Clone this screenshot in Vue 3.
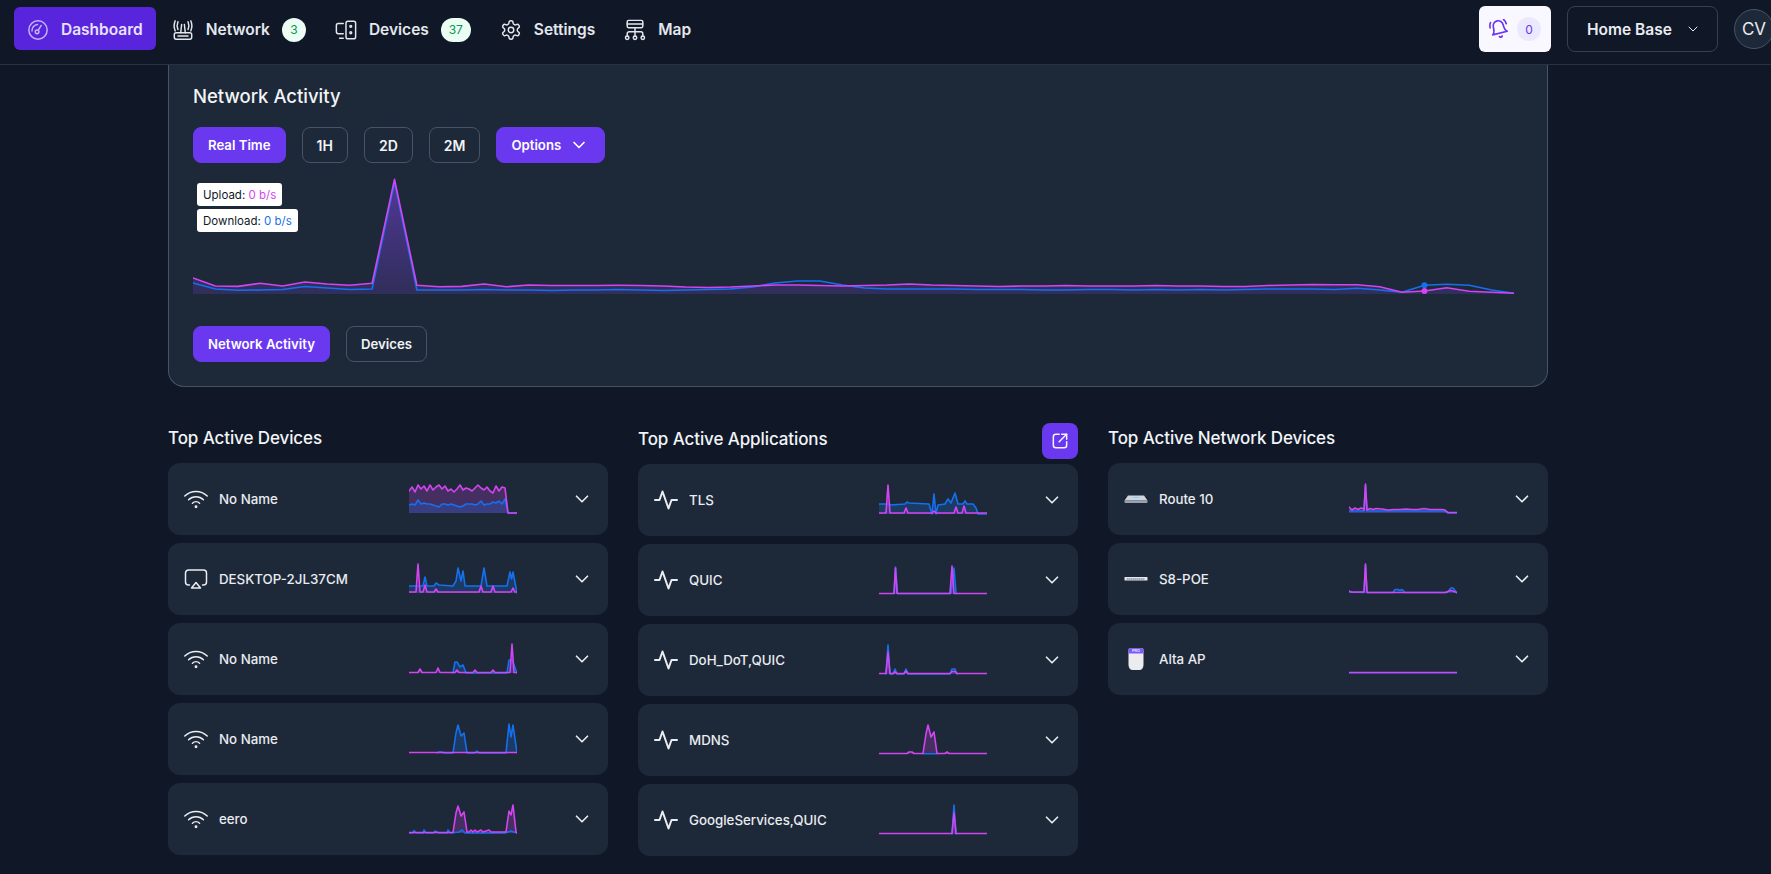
<script setup>
// chart colours
const PINK = "#d444f1";
const BLUE = "#1570ef";

const CHART_W = 1321;
const BASE = 123;

// main chart: height above the baseline, one value per 22.4px
const mainUp = [16, 8, 7.6, 10.7, 8, 12, 10, 8.7, 10.7, 114.7, 8.7, 7.3, 7.6, 10, 7.3, 9, 8.5, 8.5, 8.5, 8.7, 8.5, 8, 7, 6.5, 7, 8, 9, 9, 8.5, 8, 8.5, 9, 10, 9, 8.5, 8, 7.5, 8, 8, 8.5, 8, 8, 8, 8.5, 8, 8, 7.5, 7.5, 8.5, 9, 9.5, 9.3, 9.3, 7.3, 1.7, 3, 6.3, 2.7, 1.7, 0.7];
const mainDown = [11, 5, 3.7, 4, 4.5, 7.5, 6, 4.5, 5, 112, 4, 4, 4, 4.5, 4, 4, 3.5, 4, 4, 4.5, 4, 3.5, 4, 4.5, 5, 7, 11, 13, 13, 9, 6, 5, 5, 5, 5, 4.5, 4.5, 4.5, 4, 4, 4.5, 4.5, 4, 4.5, 4, 4.5, 4, 4.5, 5, 5, 5, 4.5, 5.7, 4, 1.7, 8.7, 9.7, 8.7, 4, 0.7];

const toPoints = (vals) => vals.map((h, i) => [(i * CHART_W) / 59, h]);

// turns [x, height] pairs into svg paths
const linePath = (pts, base) => pts.map((p, i) => `${i ? "L" : "M"}${p[0]} ${base - p[1]}`).join(" ");
const areaPath = (pts, base) => `${linePath(pts, base)} L${pts[pts.length - 1][0]} ${base} L${pts[0][0]} ${base} Z`;

const mainUpPts = toPoints(mainUp);
const mainDownPts = toPoints(mainDown);

// even steps, for the noisy series
const steps = (vals, step, tail) => [...vals.map((h, i) => [i * step, h]), ...tail];

const devices = [
  {
    id: 1,
    name: "No Name",
    icon: "wifi",
    up: steps([22, 26, 21, 28, 24, 27, 22, 28, 23, 26, 28, 24, 27, 22, 24, 21, 24, 28, 23, 25, 24, 22, 25, 28, 25, 23, 26, 22, 20, 27, 22, 26, 25], 3, [[99, 0], [108, 0]]),
    down: steps([8, 9, 8, 13, 9, 10, 9, 9, 8, 7, 6, 9, 9, 8, 9, 8, 7, 6, 7, 9, 9, 9, 8, 9, 12, 8, 9, 9, 11, 10, 12, 9, 14], 3, [[99, 0], [108, 0]]),
  },
  {
    id: 2,
    name: "DESKTOP-2JL37CM",
    icon: "airplay",
    up: [[0, 1], [7, 1], [9, 29], [11, 1], [14, 1], [16, 8], [18, 1], [25, 1], [27, 4], [29, 1], [70, 1], [72, 7], [74, 1], [82, 1], [84, 7], [86, 1], [102, 1], [104, 5], [106, 1], [108, 1]],
    down: [[0, 7], [14, 7], [16, 16], [18, 7], [25, 7], [27, 10], [30, 8], [44, 7], [47, 12], [49, 25], [52, 12], [54, 22], [56, 7], [72, 7], [75, 25], [78, 7], [98, 7], [101, 21], [102.5, 14], [104, 21], [108, 0]],
  },
  {
    id: 3,
    name: "No Name",
    icon: "wifi",
    up: [[0, 0.5], [9, 0.5], [11, 4], [13, 0.5], [27, 0.5], [29, 5], [31, 0.5], [46, 0.5], [48, 3], [50, 0.5], [64, 0.5], [66, 3], [68, 0.5], [82, 0.5], [84, 3], [86, 0.5], [101, 0.5], [103, 29], [105, 0.5], [108, 0.5]],
    down: [[44, 0], [46, 11], [48, 11], [51, 6], [54, 8], [57, 0], [98, 0], [100, 13], [103, 13], [105, 8], [108, 0]],
  },
  {
    id: 4,
    name: "No Name",
    icon: "wifi",
    up: [[0, 0.5], [108, 0.5]],
    down: [[28, 0], [30, 1], [33, 1], [35, 0], [44, 0], [47, 20], [49, 28], [52, 17], [55, 20], [58, 0], [66, 0], [68, 2], [70, 0], [97, 0], [100, 29], [102, 16], [104, 28], [108, 0]],
  },
  {
    id: 5,
    name: "eero",
    icon: "wifi",
    up: [[0, 0.5], [44, 0.5], [47, 20], [49, 27], [52, 17], [55, 21], [58, 1], [60, 1], [62, 3], [64, 1], [66, 3], [68, 1], [72, 3], [74, 1], [80, 3], [82, 1], [97, 1], [100, 22], [102, 18], [104, 28], [107, 1], [108, 0]],
    down: [[0, 0], [4, 0], [5, 2.5], [7, 0], [14, 0], [15, 3], [17, 0], [25, 0], [26, 2], [30, 0], [38, 0], [39, 3], [41, 0], [50, 1], [53, 3], [56, 0], [96, 0], [102, 2], [108, 0]],
  },
];

const applications = [
  {
    id: 1,
    name: "TLS",
    icon: "activity",
    up: [[0, 1], [7, 1], [9, 29], [11, 1], [25, 1], [27, 6], [29, 1], [53, 1], [55, 3], [57, 1], [75, 1], [77, 7], [79, 1], [83, 1], [85, 8], [87, 1], [108, 1]],
    down: [[0, 10], [10, 10], [12, 9], [26, 10], [28, 12], [30, 11], [50, 10], [53, 0], [55, 20], [57, 0], [59, 9], [66, 10], [69, 15], [72, 11], [76, 21], [79, 10], [84, 10], [86, 13], [88, 10], [94, 10], [97, 6], [99, 0], [108, 0]],
  },
  {
    id: 2,
    name: "QUIC",
    icon: "activity",
    up: [[0, 0.5], [15, 0.5], [16.5, 26], [18, 0.5], [71, 0.5], [73, 28], [75, 0.5], [108, 0.5]],
    down: [[15, 0.5], [16.5, 27], [18.5, 0.5], [72, 0.5], [75, 26], [77, 0.5]],
  },
  {
    id: 3,
    name: "DoH_DoT,QUIC",
    icon: "activity",
    up: [[0, 0.5], [7, 0.5], [9, 22], [11, 0.5], [14, 0.5], [16, 2], [18, 0.5], [25, 0.5], [27, 3], [29, 0.5], [71, 0.5], [73, 2.5], [76, 2.5], [78, 0.5], [108, 0.5]],
    down: [[7, 0], [9, 29], [11, 0], [14, 0], [16, 5], [18, 0], [25, 0], [27, 5], [29, 0], [71, 0], [73, 5], [76, 5], [78, 0]],
  },
  {
    id: 4,
    name: "MDNS",
    icon: "activity",
    up: [[0, 0.5], [28, 0.5], [30, 2], [33, 2], [35, 0.5], [44, 0.5], [47, 20], [49, 29], [52, 17], [55, 22], [58, 0.5], [66, 0.5], [68, 2], [70, 0.5], [108, 0.5]],
    down: [[44, 0.3], [58, 0.3]],
  },
  {
    id: 5,
    name: "GoogleServices,QUIC",
    icon: "activity",
    up: [[0, 0.5], [73, 0.5], [75, 21], [77, 0.5], [108, 0.5]],
    down: [[73, 0], [75, 29], [77, 0]],
  },
];

const networkDevices = [
  {
    id: 1,
    name: "Route 10",
    icon: "router",
    up: steps([6, 3, 5, 3.5, 5, 4], 3, [[15, 3], [16.5, 29], [18, 3], [21, 4.5], [24, 3.5], [27, 4.5], [33, 4], [39, 3], [45, 3.5], [51, 3.5], [57, 4], [63, 3.5], [69, 3.5], [75, 4.5], [81, 3.5], [87, 3.5], [93, 3.5], [96, 3], [99, 0.5], [108, 0.5]]),
    down: [[0, 2], [15, 2], [16.5, 27], [18, 2], [96, 2], [99, 0], [108, 0]],
  },
  {
    id: 2,
    name: "S8-POE",
    icon: "switch",
    up: [[0, 2], [3, 0.8], [12, 1], [15, 1], [16.5, 29], [18, 0.5], [96, 0.5], [102, 2.5], [108, 0.5]],
    down: [[0, 1], [15, 0.5], [16.5, 28], [18, 0.5], [44, 0.5], [46, 3.5], [49, 3.5], [51, 2.5], [53, 3.5], [56, 0.5], [98, 0.5], [102, 5], [104, 5], [108, 0]],
  },
  {
    id: 3,
    name: "Alta AP",
    icon: "ap",
    up: [[0, 0.5], [108, 0.5]],
    down: [[0, 0.2], [108, 0.2]],
  },
];

const columns = [
  { id: 1, title: "Top Active Devices", items: devices },
  { id: 2, title: "Top Active Applications", items: applications, link: true },
  { id: 3, title: "Top Active Network Devices", items: networkDevices },
];
</script>

<template>
  <div class="page">
    <!-- top bar -->
    <header class="topbar">
      <nav class="nav">
        <a class="nav-item active">
          <svg class="nav-icon" viewBox="0 0 24 24"><circle cx="12" cy="12" r="10" /><circle cx="11" cy="14" r="2" /><path d="M12.2 12.4 15.5 7" /><path d="M5.5 13a6.5 6.5 0 0 1 6-7" /></svg>
          Dashboard
        </a>
        <a class="nav-item">
          <svg class="nav-icon" viewBox="0 0 24 24"><rect x="2.500" y="15" width="19" height="7" rx="2" /><path d="M6.500 18.500h11" /><path d="M9.500 15 10.500 6" /><path d="M14.500 15 13.500 6" /><path d="M6.500 11.500a11 11 0 0 1 0-8.500" /><path d="M17.500 11.500a11 11 0 0 0 0-8.500" /><path d="M3.500 13a14 14 0 0 1 0-11" /><path d="M20.500 13a14 14 0 0 0 0-11" /></svg>
          Network
          <span class="count">3</span>
        </a>
        <a class="nav-item">
          <svg class="nav-icon" viewBox="0 0 24 24"><rect x="12" y="2.500" width="10.500" height="19" rx="2" /><circle cx="17.200" cy="8" r="1" /><circle cx="17.200" cy="15" r="1" /><path d="M9 5H3.500a2 2 0 0 0-2 2v7a2 2 0 0 0 2 2H9" /><path d="M5 21h4" /></svg>
          Devices
          <span class="count wide">37</span>
        </a>
        <a class="nav-item">
          <svg class="nav-icon" viewBox="0 0 24 24"><path d="M12.22 2h-.44a2 2 0 0 0-2 2v.18a2 2 0 0 1-1 1.73l-.43.25a2 2 0 0 1-2 0l-.15-.08a2 2 0 0 0-2.73.73l-.22.38a2 2 0 0 0 .73 2.73l.15.1a2 2 0 0 1 1 1.72v.51a2 2 0 0 1-1 1.74l-.15.09a2 2 0 0 0-.73 2.73l.22.38a2 2 0 0 0 2.73.73l.15-.08a2 2 0 0 1 2 0l.43.25a2 2 0 0 1 1 1.73V20a2 2 0 0 0 2 2h.44a2 2 0 0 0 2-2v-.18a2 2 0 0 1 1-1.73l.43-.25a2 2 0 0 1 2 0l.15.08a2 2 0 0 0 2.73-.73l.22-.39a2 2 0 0 0-.73-2.73l-.15-.08a2 2 0 0 1-1-1.74v-.5a2 2 0 0 1 1-1.74l.15-.09a2 2 0 0 0 .73-2.73l-.22-.38a2 2 0 0 0-2.73-.73l-.15.08a2 2 0 0 1-2 0l-.43-.25a2 2 0 0 1-1-1.73V4a2 2 0 0 0-2-2z" /><circle cx="12" cy="12" r="3" /></svg>
          Settings
        </a>
        <a class="nav-item">
          <svg class="nav-icon" viewBox="0 0 24 24"><rect x="3.500" y="1.500" width="17" height="8" rx="1.500" /><path d="M3.500 5.500h17" /><path d="M12 9.500V19" /><path d="M3.500 19v-3a2 2 0 0 1 2-2h13a2 2 0 0 1 2 2v3" /><circle cx="3.500" cy="20.500" r="1.900" /><circle cx="12" cy="20.500" r="1.900" /><circle cx="20.500" cy="20.500" r="1.900" /></svg>
          Map
        </a>
      </nav>
      <div class="top-right">
        <button class="bell-btn">
          <svg class="bell" viewBox="0 0 24 24"><g transform="rotate(-14 12 12)"><path d="M6 8a6 6 0 0 1 12 0c0 7 3 9 3 9H3s3-2 3-9" /><path d="M10.300 21a1.940 1.940 0 0 0 3.400 0" /><path d="M4 2C2.800 3.700 2 5.700 2 8" /><path d="M22 8c0-2.300-.8-4.300-2-6" /></g></svg>
          <span class="bell-count">0</span>
        </button>
        <button class="site-btn">
          Home Base
          <svg class="chev small" viewBox="0 0 24 24"><path d="M6 9l6 6 6-6" /></svg>
        </button>
        <div class="avatar">CV</div>
      </div>
    </header>

    <main class="content">
      <!-- network activity panel -->
      <section class="panel">
        <h2 class="panel-title">Network Activity</h2>
        <div class="btn-row">
          <button class="btn primary">Real Time</button>
          <button class="btn short">1H</button>
          <button class="btn short">2D</button>
          <button class="btn short">2M</button>
          <button class="btn primary options">
            Options
            <svg class="chev" viewBox="0 0 24 24"><path d="M6 9l6 6 6-6" /></svg>
          </button>
        </div>
        <div class="chart">
          <svg :width="CHART_W" height="131" :viewBox="`0 0 ${CHART_W} 131`">
            <defs>
              <linearGradient id="mainFill" x1="0" y1="0" x2="0" y2="1">
                <stop offset="0" stop-color="#5b3aa8" stop-opacity="0.85" />
                <stop offset="1" stop-color="#5b3aa8" stop-opacity="0.3" />
              </linearGradient>
            </defs>
            <path :d="areaPath(mainUpPts, BASE)" fill="url(#mainFill)" />
            <path :d="linePath(mainDownPts, BASE)" :stroke="BLUE" class="line" />
            <path :d="linePath(mainUpPts, BASE)" :stroke="PINK" class="line" />
            <circle :cx="mainDownPts[55][0]" :cy="BASE - mainDown[55]" r="3" :fill="BLUE" />
            <circle :cx="mainUpPts[55][0]" :cy="BASE - mainUp[55]" r="3" :fill="PINK" />
          </svg>
          <div class="tips">
            <div class="tip">Upload: <span class="pink">0 b/s</span></div>
            <div class="tip">Download: <span class="blue">0 b/s</span></div>
          </div>
        </div>
        <div class="btn-row">
          <button class="btn primary">Network Activity</button>
          <button class="btn">Devices</button>
        </div>
      </section>

      <!-- top lists -->
      <section class="lists">
        <div v-for="col in columns" :key="col.id" class="column">
          <div class="col-head" :class="{ linked: col.link }">
            <h3>{{ col.title }}</h3>
            <button v-if="col.link" class="link-btn">
              <svg viewBox="0 0 24 24"><path d="M11 4H7a3 3 0 0 0-3 3v10a3 3 0 0 0 3 3h10a3 3 0 0 0 3-3v-4" /><path d="M14 4h6v6" /><path d="M20 4l-9 9" /></svg>
            </button>
          </div>
          <div class="cards">
            <div v-for="item in col.items" :key="item.id" class="card">
              <div class="card-left">
                <svg v-if="item.icon === 'wifi'" class="card-icon" viewBox="0 0 24 24"><path d="M.8 9a16 16 0 0 1 22.400 0" /><path d="M4.600 12.700a10.600 10.600 0 0 1 14.800 0" /><path d="M8.400 16.200a5.200 5.200 0 0 1 7.200 0" /><circle cx="12" cy="19.800" r="0.7" /></svg>
                <svg v-else-if="item.icon === 'airplay'" class="card-icon" viewBox="0 0 24 24"><path d="M5.500 18H4.500a3 3 0 0 1-3-3V6a3 3 0 0 1 3-3h15a3 3 0 0 1 3 3v9a3 3 0 0 1-3 3h-1" /><path d="M12 15.500l4.500 5.500h-9z" /></svg>
                <svg v-else-if="item.icon === 'activity'" class="card-icon pulse" viewBox="0 0 24 24"><path d="M1 12h4.500L8.500 3.500 14.500 20.500 17.500 12H23" /></svg>
                <svg v-else-if="item.icon === 'router'" class="card-icon solid" viewBox="0 0 24 24">
                  <path d="M4 8.500h16l3.500 5h-23z" fill="#d0d5dd" />
                  <path d="M.5 13.500h23v1.500a1 1 0 0 1-1 1h-21a1 1 0 0 1-1-1z" fill="#98a2b3" />
                  <path d="M9 10.500h6" stroke="#7cd4fd" stroke-width="1" />
                </svg>
                <svg v-else-if="item.icon === 'switch'" class="card-icon solid" viewBox="0 0 24 24">
                  <rect x="0.500" y="10" width="23" height="3.500" rx="0.500" fill="#e4e7ec" />
                  <path d="M3 12h18" stroke="#667085" stroke-width="1" stroke-dasharray="1 1" />
                </svg>
                <svg v-else class="card-icon solid" viewBox="0 0 24 24">
                  <path d="M4.500 3a2 2 0 0 1 2-2h11a2 2 0 0 1 2 2v15c0 3-2 5-4 5h-7c-2 0-4-2-4-5z" fill="#eaecf0" />
                  <path d="M4.500 6.500V3a2 2 0 0 1 2-2h11a2 2 0 0 1 2 2v3.500z" fill="#7a5af8" />
                  <text x="12" y="5.300" class="pro">PRO</text>
                </svg>
                <span class="card-name">{{ item.name }}</span>
              </div>
              <svg class="spark" width="108" height="36" viewBox="0 0 108 36">
                <path :d="areaPath(item.up, 35)" :fill="PINK" fill-opacity="0.22" />
                <path :d="areaPath(item.down, 35)" :fill="BLUE" fill-opacity="0.24" />
                <path :d="linePath(item.down, 35)" :stroke="BLUE" class="line" />
                <path :d="linePath(item.up, 35)" :stroke="PINK" class="line" />
              </svg>
              <svg class="chev card-chev" viewBox="0 0 24 24"><path d="M6 9l6 6 6-6" /></svg>
            </div>
          </div>
        </div>
      </section>
    </main>
  </div>
</template>

<style>
html,
body {
  margin: 0;
  background: #101828;
  overflow: hidden;
}
</style>

<style scoped>
.page {
  height: 874px;
  overflow: hidden;
  background: #101828;
  color: #f2f4f7;
  font-family: Inter, "Noto Sans", sans-serif;
}
svg {
  fill: none;
  stroke: currentColor;
  stroke-linecap: round;
  stroke-linejoin: round;
  flex-shrink: 0;
}
button {
  font-family: inherit;
  cursor: pointer;
}

/* top bar */
.topbar {
  height: 64px;
  border-bottom: 1px solid #263244;
  display: flex;
  align-items: flex-start;
  justify-content: space-between;
}
.nav {
  display: flex;
  align-items: center;
  gap: 3px;
  margin: 7px 0 0 14px;
}
.nav-item {
  box-sizing: border-box;
  height: 43px;
  padding: 2px 13px 0;
  display: flex;
  align-items: center;
  gap: 12px;
  border-radius: 6px;
  font-size: 15.500px;
  font-weight: 600;
  color: #e4e7ec;
}
.nav-item.active {
  background: #5925dc;
  color: #e9e2fd;
}
.nav-icon {
  width: 22px;
  height: 22px;
  stroke-width: 1.600;
}
.active .nav-icon {
  color: #c4b5fd;
}
.count {
  width: 24px;
  height: 24px;
  border-radius: 12px;
  background: #ecfdf3;
  color: #039855;
  font-size: 12px;
  font-weight: 400;
  display: flex;
  align-items: center;
  justify-content: center;
}
.count.wide {
  width: 30px;
}
.top-right {
  display: flex;
  align-items: center;
  margin-top: 6px;
  width: 292px;
  flex-shrink: 0;
}
.bell-btn {
  width: 72px;
  height: 46px;
  flex-shrink: 0;
  border: none;
  border-radius: 6px;
  background: #f9f7ff;
  display: flex;
  align-items: center;
  padding: 0 10px;
  gap: 8px;
}
.bell {
  width: 20px;
  height: 20px;
  color: #6938ef;
  stroke-width: 2;
}
.bell-count {
  width: 24px;
  height: 24px;
  border-radius: 12px;
  background: #ebe9fe;
  color: #6938ef;
  font-size: 12px;
  display: flex;
  align-items: center;
  justify-content: center;
}
.site-btn {
  width: 151px;
  height: 46px;
  flex-shrink: 0;
  margin-left: 16px;
  border: 1px solid #344054;
  border-radius: 8px;
  background: transparent;
  color: #eaecf0;
  font-size: 15.500px;
  font-weight: 600;
  display: flex;
  align-items: center;
  gap: 13px;
  padding: 0 0 0 19px;
}
.avatar {
  box-sizing: border-box;
  width: 40px;
  height: 40px;
  margin-left: 16px;
  flex-shrink: 0;
  border: 1px solid #475467;
  border-radius: 50%;
  background: #1d2939;
  color: #eaecf0;
  font-size: 17px;
  display: flex;
  align-items: center;
  justify-content: center;
}
.chev {
  width: 20px;
  height: 20px;
  stroke-width: 2;
}
.chev.small {
  width: 16px;
  height: 16px;
  stroke-width: 1.500;
}

/* panel */
.content {
  width: 1380px;
  margin-left: 168px;
}
.panel {
  box-sizing: border-box;
  height: 322px;
  padding: 17px 24px 24px;
  background: #1d2939;
  border: 1px solid #475467;
  border-top: none;
  border-radius: 0 0 16px 16px;
}
.panel-title {
  margin: 0 0 17px;
  font-size: 18.500px;
  line-height: 28px;
  font-weight: 500;
  color: #f2f4f7;
}
.btn-row {
  display: flex;
  gap: 16px;
}
.btn {
  height: 36px;
  padding: 0 14px;
  border: 1px solid #475467;
  border-radius: 8px;
  background: transparent;
  color: #f2f4f7;
  font-size: 13.200px;
  font-weight: 600;
  display: flex;
  align-items: center;
}
.btn.short {
  font-size: 14px;
}
.btn.primary {
  background: #6938ef;
  border-color: #6938ef;
  color: #fff;
}
.btn.options {
  gap: 8px;
  padding-right: 15px;
}
.chart {
  position: relative;
  height: 131px;
  margin: 8px 0 24px;
}
.chart svg {
  display: block;
  stroke: none;
}
.line {
  fill: none;
  stroke-width: 1.600;
}
.tips {
  position: absolute;
  left: 4px;
  top: 12px;
  display: flex;
  flex-direction: column;
  align-items: flex-start;
  gap: 3px;
}
.tip {
  height: 23px;
  line-height: 24px;
  padding: 0 6px;
  background: #fff;
  border-radius: 3px;
  font-size: 11.500px;
  color: #101828;
}
.pink {
  color: #d444f1;
}
.blue {
  color: #1570ef;
}

/* lists */
.lists {
  display: grid;
  grid-template-columns: repeat(3, 440px);
  gap: 30px;
  margin-top: 36px;
}
.col-head {
  height: 40px;
  display: flex;
  align-items: flex-start;
  justify-content: space-between;
}
.col-head.linked {
  height: 41px;
}
.col-head h3 {
  margin: 1px 0 0;
  font-size: 17px;
  line-height: 28px;
  font-weight: 500;
  letter-spacing: -0.1px;
  color: #f2f4f7;
}
.col-head.linked h3 {
  margin-top: 2px;
}
.link-btn {
  width: 36px;
  height: 36px;
  padding: 0;
  border: none;
  border-radius: 8px;
  background: #6938ef;
  color: #f4f3ff;
  display: flex;
  align-items: center;
  justify-content: center;
}
.link-btn svg {
  width: 20px;
  height: 20px;
  stroke-width: 1.800;
}
.cards {
  display: flex;
  flex-direction: column;
  gap: 8px;
}
.card {
  height: 72px;
  padding: 0 15px 0 16px;
  border-radius: 12px;
  background: #1d2939;
  display: flex;
  align-items: center;
}
.card-left {
  width: 225px;
  display: flex;
  align-items: center;
  gap: 11px;
}
.card-icon {
  width: 24px;
  height: 24px;
  stroke-width: 1.500;
  color: #eaecf0;
}
.card-icon.pulse {
  stroke-width: 2;
}
.card-icon.solid {
  stroke: none;
}
.pro {
  font-family: Inter, sans-serif;
  font-size: 3.800px;
  font-weight: 700;
  fill: #e9e2fd;
  text-anchor: middle;
}
.card-name {
  font-size: 13.300px;
  font-weight: 500;
  color: #eaecf0;
  white-space: nowrap;
}
.spark {
  margin-bottom: 6px;
  stroke: none;
}
.card-chev {
  margin-left: auto;
  width: 22px;
  height: 22px;
  stroke-width: 1.800;
  color: #eaecf0;
}
</style>
